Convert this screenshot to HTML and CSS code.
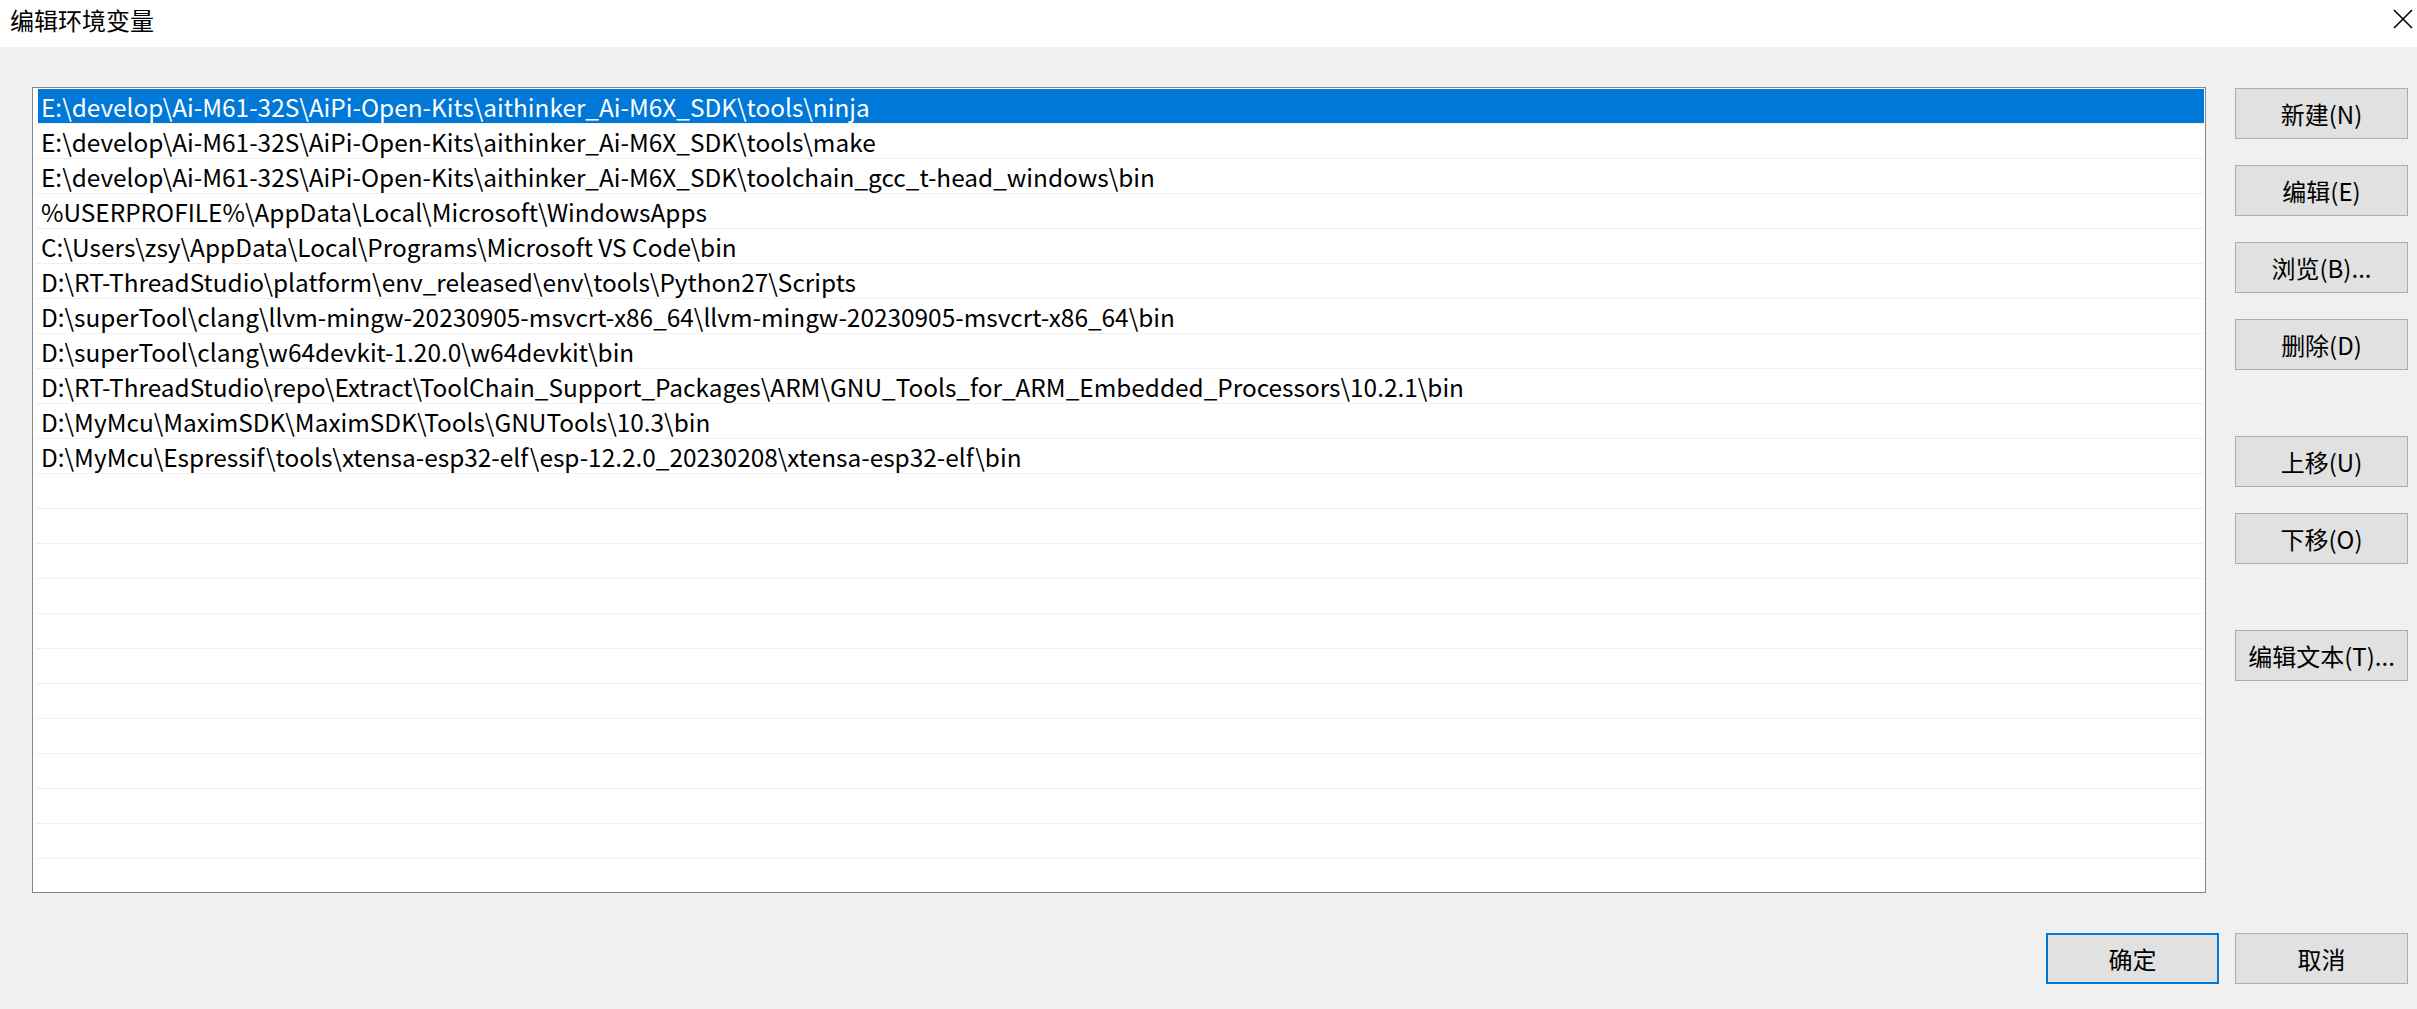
FILE: index.html
```html
<!DOCTYPE html>
<html lang="zh-CN">
<head>
<meta charset="utf-8">
<title>编辑环境变量</title>
<link rel="stylesheet" href="styles.css">
</head>
<body>
<div class="window">
  <div class="titlebar">
    <span class="title">编辑环境变量</span>
    <span class="close" aria-label="关闭">
      <svg width="20" height="20" viewBox="0 0 20 20"><path d="M1 1 L19 19 M19 1 L1 19" stroke="#000" stroke-width="1.6" fill="none"/></svg>
    </span>
  </div>
  <div class="main">
    <div class="listbox">
      <div class="row sel"><span class="label">E:\develop\Ai-M61-32S\AiPi-Open-Kits\aithinker_Ai-M6X_SDK\tools\ninja</span></div>
      <div class="row"><span class="label">E:\develop\Ai-M61-32S\AiPi-Open-Kits\aithinker_Ai-M6X_SDK\tools\make</span></div>
      <div class="row"><span class="label">E:\develop\Ai-M61-32S\AiPi-Open-Kits\aithinker_Ai-M6X_SDK\toolchain_gcc_t-head_windows\bin</span></div>
      <div class="row"><span class="label">%USERPROFILE%\AppData\Local\Microsoft\WindowsApps</span></div>
      <div class="row"><span class="label">C:\Users\zsy\AppData\Local\Programs\Microsoft VS Code\bin</span></div>
      <div class="row"><span class="label">D:\RT-ThreadStudio\platform\env_released\env\tools\Python27\Scripts</span></div>
      <div class="row"><span class="label">D:\superTool\clang\llvm-mingw-20230905-msvcrt-x86_64\llvm-mingw-20230905-msvcrt-x86_64\bin</span></div>
      <div class="row"><span class="label">D:\superTool\clang\w64devkit-1.20.0\w64devkit\bin</span></div>
      <div class="row"><span class="label">D:\RT-ThreadStudio\repo\Extract\ToolChain_Support_Packages\ARM\GNU_Tools_for_ARM_Embedded_Processors\10.2.1\bin</span></div>
      <div class="row"><span class="label">D:\MyMcu\MaximSDK\MaximSDK\Tools\GNUTools\10.3\bin</span></div>
      <div class="row"><span class="label">D:\MyMcu\Espressif\tools\xtensa-esp32-elf\esp-12.2.0_20230208\xtensa-esp32-elf\bin</span></div>
      <div class="row"><span class="label"></span></div>
      <div class="row"><span class="label"></span></div>
      <div class="row"><span class="label"></span></div>
      <div class="row"><span class="label"></span></div>
      <div class="row"><span class="label"></span></div>
      <div class="row"><span class="label"></span></div>
      <div class="row"><span class="label"></span></div>
      <div class="row"><span class="label"></span></div>
      <div class="row"><span class="label"></span></div>
      <div class="row"><span class="label"></span></div>
      <div class="row"><span class="label"></span></div>
      <div class="row"><span class="label"></span></div>
    </div>
    <div class="side">
      <button class="btn">新建(N)</button>
      <button class="btn">编辑(E)</button>
      <button class="btn">浏览(B)...</button>
      <button class="btn">删除(D)</button>
      <button class="btn group">上移(U)</button>
      <button class="btn">下移(O)</button>
      <button class="btn group">编辑文本(T)...</button>
    </div>
  </div>
  <div class="footer">
    <button class="btn default">确定</button>
    <button class="btn">取消</button>
  </div>
</div>
</body>
</html>
```
FILE: styles.css
```css
html, body {
  margin: 0;
  padding: 0;
}
body {
  background: #f0f0f0;
  font-family: "Noto Sans CJK SC", "Noto Sans", sans-serif;
  color: #000;
}
.window {
  width: 2417px;
  height: 1009px;
  overflow: hidden;
}
.titlebar {
  height: 47px;
  background: #fff;
  display: flex;
  align-items: flex-start;
  justify-content: space-between;
  position: relative;
}
.title {
  font-size: 24px;
  line-height: 40px;
  padding-left: 10px;
}
.close {
  position: absolute;
  top: 9px;
  right: 4px;
  width: 20px;
  height: 20px;
}
.close svg {
  display: block;
}
.main {
  display: flex;
  align-items: flex-start;
  gap: 29px;
  padding: 40px 9px 0 32px;
}
.listbox {
  width: 2174px;
  height: 806px;
  box-sizing: border-box;
  border: 1px solid #828790;
  background: #fff;
  overflow: hidden;
  padding-top: 1px;
}
.row {
  height: 35px;
  box-sizing: border-box;
  border-bottom: 1px solid #f0f0f0;
  margin: 0 1px 0 2px;
  padding-left: 3px;
  display: flex;
}
.label {
  flex: 1;
  display: flex;
  align-items: center;
  padding-left: 3px;
  padding-top: 1px;
  font-size: 24.4px;
  line-height: 34px;
  white-space: nowrap;
}
.row.sel .label {
  background: #0078d7;
  color: #fff;
}
.side {
  display: flex;
  flex-direction: column;
  gap: 26px;
  padding-top: 1px;
  width: 173px;
}
.btn {
  width: 173px;
  height: 51px;
  box-sizing: border-box;
  border: 1px solid #adadad;
  background: #e1e1e1;
  font-family: "Noto Sans CJK SC", "Noto Sans", sans-serif;
  font-size: 24px;
  color: #000;
  padding: 0;
  margin: 0;
  display: flex;
  align-items: center;
  justify-content: center;
}
.btn.group {
  margin-top: 40px;
}
.btn.default {
  border: 2px solid #0078d7;
}
.footer {
  display: flex;
  justify-content: flex-end;
  gap: 16px;
  padding-right: 9px;
  margin-top: 40px;
}
```
